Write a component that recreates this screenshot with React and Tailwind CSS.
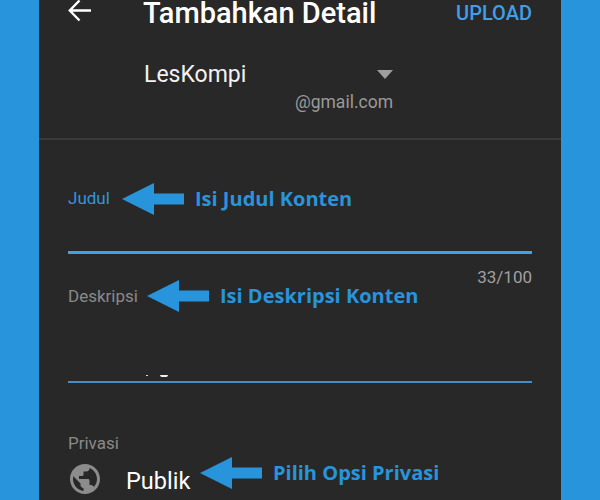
const roboto = { fontFamily: "Roboto, sans-serif" };

function Arrow() {
  return (
    <svg width="62" height="32" viewBox="0 0 62 32" className="shrink-0">
      <path d="M0 16 L32 0 V10.5 H62 V21.5 H32 V32 Z" fill="#2894dc" />
    </svg>
  );
}

function Note({ children }) {
  return (
    <span className="text-[20px] font-bold leading-[28px] text-[#2894dc] whitespace-nowrap" style={{ fontFamily: "'Open Sans', sans-serif" }}>
      {children}
    </span>
  );
}

export default function App() {
  return (
    <div className="w-[600px] h-[500px] overflow-hidden bg-[#2894dc] px-[39px]" style={roboto}>
      <div className="h-full bg-[#282828] flex flex-col">
        <div className="px-[29px]">
          <div className="h-[26px] flex items-center">
            <svg width="24" height="24" viewBox="0 0 24 24" fill="none" stroke="#fff" strokeWidth="2.4" className="-mt-[4px] w-[24px] shrink-0">
              <path d="M23 11.5H2M11.5 1.5L1.8 11.5L11.5 21.5" />
            </svg>
            <span className="ml-[51px] text-[29px] font-medium text-white leading-[28px] whitespace-nowrap">Tambahkan Detail</span>
            <span className="ml-auto text-[20px] font-medium text-[#3f9fe8] leading-[26px]">UPLOAD</span>
          </div>
          <div className="mt-[37px] h-[24px] flex items-center pl-[76px]">
            <span className="text-[23px] text-[#f2f2f2] leading-[24px]">LesKompi</span>
            <span className="ml-[131px] -mt-[2px] w-0 h-0 border-x-[8px] border-x-transparent border-t-[9px] border-t-[#9e9e9e]"></span>
          </div>
          <div className="mt-[5px] h-[20px] flex justify-end pr-[139px] text-[17.5px] leading-[20px] text-[#9a9a9a]">@gmail.com</div>
        </div>

        <div className="mt-[26px] h-[2px] bg-[#3a3a3a]"></div>

        <div className="px-[29px]">
          <div className="mt-[43px] h-[32px] flex items-center">
            <span className="text-[17px] text-[#2f97dd] w-[54px] leading-[20px] -mt-[2px]">Judul</span>
            <Arrow />
            <span className="ml-[11px]"><Note>Isi Judul Konten</Note></span>
          </div>
          <div className="mt-[36px] h-[3px] bg-[#40a0ea]"></div>
          <div className="mt-[13px] flex justify-end text-[17px] leading-[20px] text-[#a0a0a0] h-[20px]">33/100</div>
          <div className="-mt-[7px] h-[32px] flex items-center">
            <span className="text-[17px] text-[#8a8a8a] w-[79px] leading-[20px]">Deskripsi</span>
            <Arrow />
            <span className="ml-[11px]"><Note>Isi Deskripsi Konten</Note></span>
          </div>
          <div className="mt-[63px] h-[2px] flex items-start pl-[78px]">
            <span className="w-[2px] h-[1px] bg-[#d8d8d8]"></span>
            <span className="ml-[12px] w-[8px] h-[2px] rounded-b-full bg-[#f0f0f0]"></span>
          </div>
          <div className="mt-[4px] h-[2px] bg-[#4a8cc4]"></div>
          <div className="mt-[50px] h-[20px] text-[17px] leading-[20px] text-[#8a8a8a]">Privasi</div>
          <div className="mt-[4px] h-[32px] flex items-center">
            <svg width="36" height="36" viewBox="0 0 24 24" fill="#8c8c8c" className="-ml-[1px] mt-[12px] shrink-0">
              <path d="M12 2C6.48 2 2 6.48 2 12s4.48 10 10 10 10-4.48 10-10S17.52 2 12 2zm-1 17.93c-3.95-.49-7-3.85-7-7.93 0-.62.08-1.21.21-1.79L9 15v1c0 1.1.9 2 2 2v1.93zm6.9-2.54c-.26-.81-1-1.39-1.9-1.39h-1v-3c0-.55-.45-1-1-1H8v-2h2c.55 0 1-.45 1-1V7h2c1.1 0 2-.9 2-2v-.41c2.93 1.19 5 4.06 5 7.41 0 2.08-.8 3.97-2.1 5.39z" />
            </svg>
            <span className="ml-[23px] mt-[16px] text-[23.5px] text-white leading-[26px] w-[74px]">Publik</span>
            <Arrow />
            <span className="ml-[11px]"><Note>Pilih Opsi Privasi</Note></span>
          </div>
        </div>
      </div>
    </div>
  );
}
